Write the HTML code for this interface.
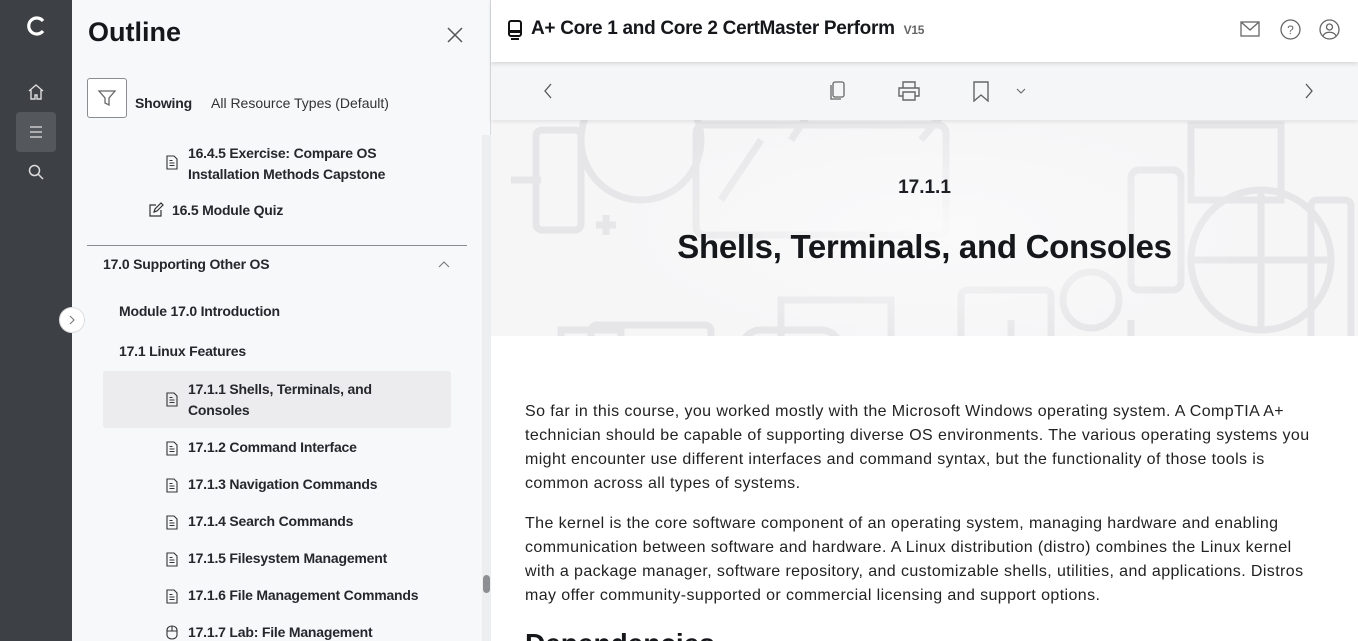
<!DOCTYPE html>
<html><head><meta charset="utf-8"><style>
*{margin:0;padding:0;box-sizing:border-box}
html,body{width:1358px;height:641px;overflow:hidden}
body{font-family:"Liberation Sans",sans-serif;color:#1d1f24;background:#fff;position:relative}
.rail{position:absolute;left:0;top:0;width:72px;height:641px;background:#3d4045}
.side{position:absolute;left:72px;top:0;width:419px;height:641px;background:#f7f8fa;border-right:1px solid #d9dbde}
.abs{position:absolute}
.item{position:absolute;font-size:14px;font-weight:bold;color:#25272c;white-space:nowrap;letter-spacing:-0.2px}
.doc{position:absolute;width:12px;height:15px}
.hdr{position:absolute;left:491px;top:0;right:0;height:62px;background:#fff;box-shadow:0 2px 4px rgba(0,0,0,.12);z-index:2}
.tb{position:absolute;left:491px;top:62px;right:0;height:58px;background:#f5f6f8;box-shadow:0 2px 4px rgba(0,0,0,.08);z-index:1}
.hero{position:absolute;left:491px;top:120px;right:0;height:216px;background:#f6f6f7;overflow:hidden}
.body p{font-size:16px;line-height:24px;color:#222;white-space:nowrap;letter-spacing:0.4px}
</style></head><body>
<div class="rail">
<svg class="abs" style="left:24px;top:14px" width="24" height="24" viewBox="0 0 24 24"><path d="M19 7A8 8 0 1 0 19 17" fill="none" stroke="#fff" stroke-width="3.2"/></svg>
<svg class="abs" style="left:27px;top:83px" width="18" height="18" viewBox="0 0 18 18" fill="none" stroke="#ddd" stroke-width="1.4"><path d="M2 8L9 2l7 6M4 7v9h4v-4h2v4h4V7"/></svg>
<div class="abs" style="left:16px;top:112px;width:40px;height:40px;background:#54575c;border-radius:4px"></div>
<svg class="abs" style="left:28px;top:124px" width="16" height="16" viewBox="0 0 16 16" stroke="#ccc" stroke-width="1.4"><path d="M2 3h12M2 8h12M2 13h12"/></svg>
<svg class="abs" style="left:27px;top:163px" width="18" height="18" viewBox="0 0 18 18" fill="none" stroke="#ddd" stroke-width="1.5"><circle cx="7.5" cy="7.5" r="5"/><path d="M11 11l5 5"/></svg>
</div>
<div class="side">
<div class="abs" style="left:16px;top:17px;font-size:27px;font-weight:bold;color:#15171b">Outline</div>
<svg class="abs" style="left:374px;top:26px" width="18" height="18" stroke="#555" stroke-width="1.5"><path d="M2 2l14 14M16 2L2 16"/></svg>
<div class="abs" style="left:15px;top:78px;width:40px;height:40px;border:1px solid #8a8c90;border-radius:3px;background:#fff"></div>
<svg class="abs" style="left:25px;top:88px" width="20" height="20" fill="none" stroke="#666" stroke-width="1.3"><path d="M2 3h16l-6 7v7l-4-2v-5z"/></svg>
<div class="item" style="left:63px;top:95px">Showing</div>
<div class="abs" style="left:139px;top:95px;font-size:14px;color:#333;white-space:nowrap">All Resource Types (Default)</div>
<div class="item" style="left:116px;top:143px;line-height:21px">16.4.5 Exercise: Compare OS<br>Installation Methods Capstone</div>
<svg class="doc" style="left:94px;top:155px" viewBox="0 0 12 15" fill="none" stroke="#333" stroke-width="1.1"><path d="M1 1h7l3 3v10H1zM3.5 8h5M3.5 10.5h5M3.5 5.5h3"/></svg>
<svg class="abs" style="left:76px;top:202px" width="16" height="16" fill="none" stroke="#333" stroke-width="1.2"><path d="M8 3H2v11h11V8M6 10l1-3 6-6 2 2-6 6z"/></svg>
<div class="item" style="left:100px;top:202px">16.5 Module Quiz</div>
<div class="abs" style="left:15px;top:245px;width:380px;height:1px;background:#8a8c90"></div>
<div class="item" style="left:31px;top:256px">17.0 Supporting Other OS</div>
<svg class="abs" style="left:366px;top:260px" width="12" height="10" fill="none" stroke="#777" stroke-width="1.1"><path d="M1 7l5-5 5 5"/></svg>
<div class="item" style="left:47px;top:303px">Module 17.0 Introduction</div>
<div class="item" style="left:47px;top:343px">17.1 Linux Features</div>
<div class="abs" style="left:31px;top:371px;width:348px;height:57px;background:#ececee;border-radius:3px"></div>
<div class="item" style="left:116px;top:379px;line-height:21px">17.1.1 Shells, Terminals, and<br>Consoles</div>
<svg class="doc" style="left:94px;top:392px" viewBox="0 0 12 15" fill="none" stroke="#333" stroke-width="1.1"><path d="M1 1h7l3 3v10H1zM3.5 8h5M3.5 10.5h5M3.5 5.5h3"/></svg>
<div class="item" style="left:116px;top:439px">17.1.2 Command Interface</div>
<svg class="doc" style="left:94px;top:441px" viewBox="0 0 12 15" fill="none" stroke="#333" stroke-width="1.1"><path d="M1 1h7l3 3v10H1zM3.5 8h5M3.5 10.5h5M3.5 5.5h3"/></svg>
<div class="item" style="left:116px;top:476px">17.1.3 Navigation Commands</div>
<svg class="doc" style="left:94px;top:478px" viewBox="0 0 12 15" fill="none" stroke="#333" stroke-width="1.1"><path d="M1 1h7l3 3v10H1zM3.5 8h5M3.5 10.5h5M3.5 5.5h3"/></svg>
<div class="item" style="left:116px;top:513px">17.1.4 Search Commands</div>
<svg class="doc" style="left:94px;top:515px" viewBox="0 0 12 15" fill="none" stroke="#333" stroke-width="1.1"><path d="M1 1h7l3 3v10H1zM3.5 8h5M3.5 10.5h5M3.5 5.5h3"/></svg>
<div class="item" style="left:116px;top:550px">17.1.5 Filesystem Management</div>
<svg class="doc" style="left:94px;top:552px" viewBox="0 0 12 15" fill="none" stroke="#333" stroke-width="1.1"><path d="M1 1h7l3 3v10H1zM3.5 8h5M3.5 10.5h5M3.5 5.5h3"/></svg>
<div class="item" style="left:116px;top:587px">17.1.6 File Management Commands</div>
<svg class="doc" style="left:94px;top:589px" viewBox="0 0 12 15" fill="none" stroke="#333" stroke-width="1.1"><path d="M1 1h7l3 3v10H1zM3.5 8h5M3.5 10.5h5M3.5 5.5h3"/></svg>
<div class="item" style="left:116px;top:624px">17.1.7 Lab: File Management</div>
<svg class="doc" style="left:94px;top:625px" viewBox="0 0 12 15" fill="none" stroke="#333" stroke-width="1.1"><path d="M1 5a5 4 0 0 1 10 0v5a5 4 0 0 1-10 0zM6 1v5M1 6h10"/></svg>
<div class="abs" style="left:410px;top:135px;width:9px;height:506px;background:#eceef0"></div>
<div class="abs" style="left:411px;top:575px;width:7px;height:18px;background:#8d8f93;border-radius:4px"></div>
</div>
<div class="abs" style="left:59px;top:307px;width:26px;height:26px;border-radius:50%;background:#fff;border:1px solid #ddd;z-index:3"></div>
<svg class="abs" style="left:68px;top:315px;z-index:4" width="8" height="10" fill="none" stroke="#777" stroke-width="1.1"><path d="M2 1l4 4-4 4"/></svg>
<div class="hdr">
<svg class="abs" style="left:17px;top:20px" width="14" height="20" viewBox="0 0 14 20"><rect x="1" y="1" width="12" height="15" rx="2" fill="none" stroke="#111" stroke-width="2"/><rect x="1" y="10" width="12" height="3" fill="#111"/><path d="M3 19h8" stroke="#111" stroke-width="2"/></svg>
<div class="abs" style="left:40px;top:18px;font-size:19px;font-weight:bold;color:#15171b;letter-spacing:-0.3px;white-space:nowrap">A+ Core 1 and Core 2 CertMaster Perform <span style="font-size:12px;color:#666;margin-left:4px">V15</span></div>
<svg class="abs" style="left:749px;top:21px" width="20" height="16" fill="none" stroke="#666" stroke-width="1.3"><rect x="1" y="1" width="18" height="14"/><path d="M1 1l9 8 9-8"/></svg>
<svg class="abs" style="left:789px;top:19px" width="21" height="21" fill="none" stroke="#666" stroke-width="1.3"><circle cx="10.5" cy="10.5" r="9.5"/><text x="10.5" y="15" font-size="12" text-anchor="middle" fill="#666" stroke="none" font-family="Liberation Sans">?</text></svg>
<svg class="abs" style="left:828px;top:19px" width="21" height="21" fill="none" stroke="#666" stroke-width="1.3"><circle cx="10.5" cy="10.5" r="9.5"/><circle cx="10.5" cy="8" r="3"/><path d="M4 17c2-5 11-5 13 0"/></svg>
</div>
<div class="tb">
<svg class="abs" style="left:52px;top:21px" width="10" height="16" fill="none" stroke="#555" stroke-width="1.3"><path d="M8 1L2 8l6 7"/></svg>
<svg class="abs" style="left:337px;top:19px" width="18" height="21" fill="none" stroke="#666" stroke-width="1.3"><rect x="5" y="1" width="11" height="15" rx="2"/><path d="M3 4v14h10"/></svg>
<svg class="abs" style="left:407px;top:19px" width="22" height="20" fill="none" stroke="#666" stroke-width="1.4"><path d="M5 7V1h12v6M5 15H1V7h20v8h-4M5 11h12v8H5z"/></svg>
<svg class="abs" style="left:482px;top:19px" width="16" height="21" fill="none" stroke="#666" stroke-width="1.4"><path d="M1 1h14v19l-7-6-7 6z"/></svg>
<svg class="abs" style="left:525px;top:26px" width="10" height="7" fill="none" stroke="#666" stroke-width="1.1"><path d="M1 1l4 4 4-4"/></svg>
<svg class="abs" style="left:813px;top:21px" width="10" height="16" fill="none" stroke="#555" stroke-width="1.3"><path d="M2 1l6 7-6 7"/></svg>
</div>
<div class="hero">
<svg class="abs" style="left:0;top:0" width="867" height="216" fill="none" stroke="#e6e6e8" stroke-width="7">
<rect x="45" y="10" width="45" height="100" rx="6"/><path d="M20 60h30M-5 0v40"/>
<circle cx="150" cy="20" r="60"/><rect x="70" y="210" width="60" height="60"/>
<rect x="100" y="205" width="120" height="100" rx="6"/><path d="M115 95v20M105 105h20"/>
<rect x="205" y="5" width="250" height="110" rx="8"/><path d="M230 80l40-60M300 20l40-60"/>
<rect x="250" y="210" width="100" height="40" rx="20"/><rect x="290" y="180" width="110" height="60"/>
<path d="M430 20l50-60"/><rect x="470" y="170" width="90" height="80" rx="6"/>
<rect x="640" y="50" width="50" height="120" rx="8"/><rect x="700" y="5" width="90" height="75"/>
<circle cx="770" cy="140" r="70"/><path d="M700 140h140M770 70v140"/>
<circle cx="600" cy="180" r="28"/><rect x="820" y="80" width="40" height="150" rx="6"/>
<path d="M640 240v-40M520 230v-30"/>
</svg>
<div class="abs" style="left:0;top:0;right:0;bottom:0;background:radial-gradient(ellipse 330px 120px at 440px 110px,rgba(250,250,251,.95),rgba(250,250,251,0))"></div>
<div class="abs" style="left:0;right:0;top:57px;text-align:center;font-size:19px;font-weight:bold;color:#1d1f24">17.1.1</div>
<div class="abs" style="left:0;right:0;top:108px;text-align:center;font-size:33px;font-weight:bold;color:#15171b;letter-spacing:-0.3px">Shells, Terminals, and Consoles</div>
</div>
<div class="body abs" style="left:525px;top:400px">
<p>So far in this course, you worked mostly with the Microsoft Windows operating system. A CompTIA A+<br>technician should be capable of supporting diverse OS environments. The various operating systems you<br>might encounter use different interfaces and command syntax, but the functionality of those tools is<br>common across all types of systems.</p>
<p style="margin-top:16px">The kernel is the core software component of an operating system, managing hardware and enabling<br>communication between software and hardware. A Linux distribution (distro) combines the Linux kernel<br>with a package manager, software repository, and customizable shells, utilities, and applications. Distros<br>may offer community-supported or commercial licensing and support options.</p>
<div style="margin-top:20px;font-size:28px;font-weight:bold;color:#15171b">Dependencies</div>
</div>
</body></html>
